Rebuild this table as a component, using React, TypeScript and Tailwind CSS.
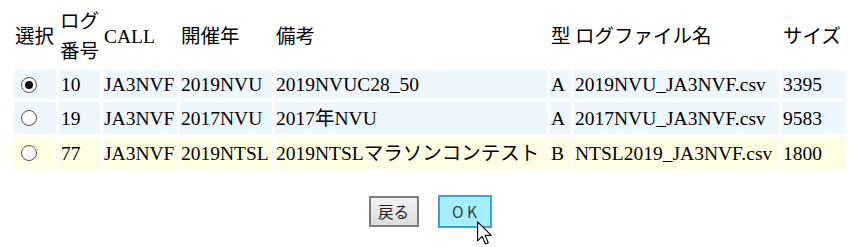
const rows = [
  { id: 10, call: "JA3NVF", year: "2019NVU", note: "2019NVUC28_50", kind: "A", file: "2019NVU_JA3NVF.csv", size: 3395, checked: true, bg: "bg-[#eef6fe]", h: "h-[26px]" },
  { id: 19, call: "JA3NVF", year: "2017NVU", note: "2017年NVU", kind: "A", file: "2017NVU_JA3NVF.csv", size: 9583, checked: false, bg: "bg-[#eef6fe]", h: "h-[32px]" },
  { id: 77, call: "JA3NVF", year: "2019NTSL", note: "2019NTSLマラソンコンテスト", kind: "B", file: "NTSL2019_JA3NVF.csv", size: 1800, checked: false, bg: "bg-[#fffee3]", h: "h-[32px]" },
];

function Radio({ checked }: { checked: boolean }) {
  return (
    <span className="ml-[6px] flex h-[16px] w-[16px] items-center justify-center rounded-full border border-[#505050] bg-white">
      {checked && <span className="h-[8px] w-[8px] rounded-full bg-[#111]" />}
    </span>
  );
}

function Cursor() {
  return (
    <svg className="pointer-events-none absolute left-[39px] top-[26px]" width="16" height="25" viewBox="0 0 13 20">
      <path
        d="M0.5 0.5 L0.5 16 L4.2 12.4 L6.9 18.6 L9.2 17.6 L6.6 11.5 L11.6 11.5 Z"
        fill="#fff"
        stroke="#000"
        strokeWidth="0.9"
        strokeLinejoin="round"
      />
    </svg>
  );
}

export default function App() {
  const cell = "px-[1px] py-0 text-left align-middle font-normal";
  return (
    <div className="h-[247px] w-[849px] overflow-hidden bg-white pt-[4px] text-[19.5px] text-black font-[family-name:Liberation_Serif,Times_New_Roman,Noto_Sans_CJK_JP,serif]">
      <table className="ml-[11px] w-[838px] table-fixed border-separate border-spacing-[3px]">
        <thead>
          <tr className="h-[60px] leading-[30px]">
            <th className={`${cell} w-[42px]`}>選択</th>
            <th className={`${cell} w-[41px]`}>
              ログ
              <br />
              番号
            </th>
            <th className={`${cell} w-[74px]`}>CALL</th>
            <th className={`${cell} w-[92px]`}>開催年</th>
            <th className={`${cell} w-[272px]`}>備考</th>
            <th className={`${cell} w-[21px] px-0`}>型</th>
            <th className={`${cell} w-[205px]`}>ログファイル名</th>
            <th className={`${cell} w-[64px]`}>サイズ</th>
          </tr>
        </thead>
        <tbody>
          {rows.map((r) => (
            <tr key={r.id} className={r.h}>
              <td className={`${cell} ${r.bg}`}>
                <Radio checked={r.checked} />
              </td>
              <td className={`${cell} ${r.bg} pl-[2px]`}>{r.id}</td>
              <td className={`${cell} ${r.bg}`}>{r.call}</td>
              <td className={`${cell} ${r.bg}`}>{r.year}</td>
              <td className={`${cell} ${r.bg} whitespace-nowrap`}>{r.note}</td>
              <td className={`${cell} ${r.bg}`}>{r.kind}</td>
              <td className={`${cell} ${r.bg}`}>{r.file}</td>
              <td className={`${cell} ${r.bg}`}>{r.size}</td>
            </tr>
          ))}
        </tbody>
      </table>
      <div className="ml-[11px] mt-[23px] flex w-[838px] items-center justify-center gap-[19px] font-[family-name:Noto_Sans_CJK_JP,sans-serif] text-[15.5px]">
        <button className="flex h-[31px] w-[50px] items-center justify-center border-2 border-[#7b7b7b] bg-gradient-to-b from-[#f2f2f2] to-[#dddddd] text-[#222]">
          戻る
        </button>
        <div className="relative">
          <button className="flex h-[33px] w-[54px] items-center justify-center border-2 border-[#3aa2d6] bg-[#a6efff] text-[#333d45]">
            O K
          </button>
          <Cursor />
        </div>
      </div>
    </div>
  );
}
